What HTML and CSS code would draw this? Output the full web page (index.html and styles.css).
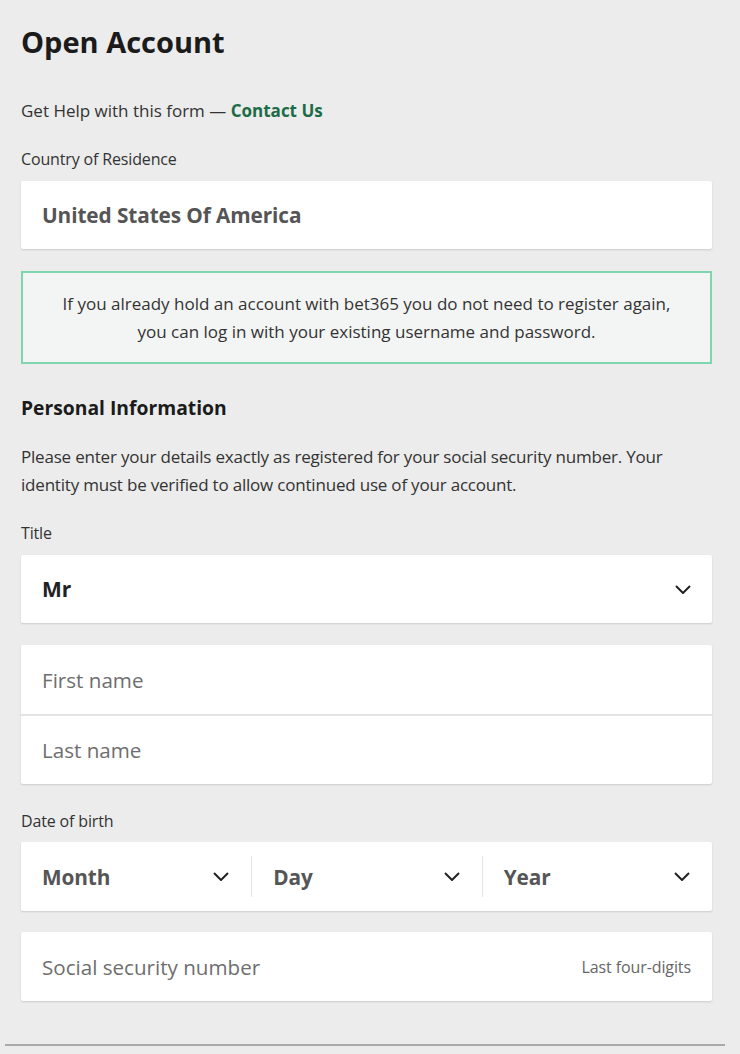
FILE: index.html
```html
<!DOCTYPE html>
<html lang="en">
<head>
<meta charset="utf-8">
<title>Open Account</title>
<link rel="stylesheet" href="styles.css">
</head>
<body>
<div class="page">
  <h1 class="title">Open Account</h1>
  <p class="help">Get Help with this form — <a class="contact" href="#">Contact Us</a></p>

  <div class="label country-label">Country of Residence</div>
  <div class="field card"><span class="value-muted">United States Of America</span></div>

  <div class="notice">If you already hold an account with bet365 you do not need to register again,<br>you can log in with your existing username and password.</div>

  <h2 class="section">Personal Information</h2>
  <p class="intro">Please enter your details exactly as registered for your social security number. Your identity must be verified to allow continued use of your account.</p>

  <div class="label title-label">Title</div>
  <div class="field card select">
    <span class="value-strong">Mr</span>
    <svg class="chev" viewBox="0 0 16 9"><path d="M1 1 L8 8 L15 1" fill="none" stroke="#222" stroke-width="2"/></svg>
  </div>

  <div class="card group">
    <div class="field row"><span class="placeholder">First name</span></div>
    <div class="field row"><span class="placeholder">Last name</span></div>
  </div>

  <div class="label dob-label">Date of birth</div>
  <div class="card dob">
    <div class="seg"><span class="value-muted">Month</span><svg class="chev" viewBox="0 0 16 9"><path d="M1 1 L8 8 L15 1" fill="none" stroke="#222" stroke-width="2"/></svg></div>
    <div class="seg"><span class="value-muted">Day</span><svg class="chev" viewBox="0 0 16 9"><path d="M1 1 L8 8 L15 1" fill="none" stroke="#222" stroke-width="2"/></svg></div>
    <div class="seg"><span class="value-muted">Year</span><svg class="chev" viewBox="0 0 16 9"><path d="M1 1 L8 8 L15 1" fill="none" stroke="#222" stroke-width="2"/></svg></div>
  </div>

  <div class="field card ssn">
    <span class="placeholder">Social security number</span>
    <span class="hint">Last four-digits</span>
  </div>
</div>
<hr class="rule">
</body>
</html>
```

FILE: styles.css
```css
html, body {
  margin: 0;
  padding: 0;
  background: #ebeceb;
}
body {
  font-family: "Open Sans", "Noto Sans", "Liberation Sans", sans-serif;
  color: #222;
  width: 740px;
  height: 1054px;
  overflow: hidden;
}
.page {
  padding: 22px 28px 0 21px;
}
.title {
  margin: 0;
  font-size: 29px;
  font-weight: 700;
  line-height: 40px;
  color: #1b1b1b;
}
.help {
  margin: 38px 0 0;
  font-size: 17px;
  line-height: 22px;
  color: #333;
}
.contact {
  color: #1d6b47;
  font-weight: 700;
  text-decoration: none;
}
.label {
  font-size: 16px;
  line-height: 20px;
  color: #333;
  letter-spacing: -0.15px;
}
.country-label {
  margin-top: 27px;
}
.card {
  background: #fff;
  box-shadow: 0 1px 2px rgba(0,0,0,0.14);
  border-radius: 2px;
}
.field {
  height: 68px;
  display: flex;
  align-items: center;
  padding: 0 21px;
  box-sizing: border-box;
}
.label + .field, .label + .card {
  margin-top: 12px;
}
.value-muted {
  font-size: 20.8px;
  font-weight: 700;
  color: #555;
  letter-spacing: -0.1px;
}
.value-strong {
  font-size: 21px;
  font-weight: 700;
  color: #222;
}
.placeholder {
  font-size: 20.6px;
  color: #6e6e6e;
}
.notice {
  margin-top: 22px;
  border: 2px solid #7ed6ae;
  background: #f3f5f4;
  padding: 17px 10px 16px;
  text-align: center;
  font-size: 17px;
  line-height: 28px;
  color: #333;
}
.section {
  margin: 31px 0 0;
  font-size: 19.3px;
  font-weight: 700;
  line-height: 26px;
  color: #1b1b1b;
}
.intro {
  margin: 22px 0 0;
  font-size: 17px;
  line-height: 28px;
  color: #333;
  letter-spacing: -0.2px;
}
.title-label {
  margin-top: 24px;
}
.select {
  justify-content: space-between;
}
.chev {
  width: 16px;
  height: 9px;
  flex: none;
}
.group {
  margin-top: 22px;
}
.row {
  height: 69px;
}
.row + .row {
  height: 70px;
  border-top: 2px solid #e3e3e3;
}
.dob-label {
  margin-top: 27px;
}
.label.dob-label + .card {
  margin-top: 11px;
}
.dob {
  height: 69px;
  display: grid;
  grid-template-columns: 1fr 1fr 1fr;
  align-items: center;
}
.seg {
  display: flex;
  align-items: center;
  justify-content: space-between;
  padding: 0 22px 0 21px;
  height: 41px;
}
.seg + .seg {
  border-left: 1px solid #e6e6e6;
}
.ssn {
  margin-top: 21px;
  height: 69px;
  justify-content: space-between;
}
.hint {
  font-size: 16px;
  color: #666;
  letter-spacing: -0.1px;
}
.rule {
  margin: 43px 15px 0 5px;
  border: 0;
  height: 2px;
  background: #aaa;
}
```
